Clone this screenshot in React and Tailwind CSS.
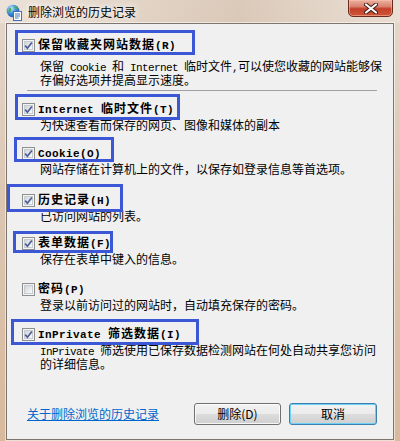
import React from 'react';

// one-byte runs (Latin, digits, brackets) take the narrow mono face, like SimSun's half-width glyphs
const Mix = ({ text, bold }) =>
    text.split(/([\x20-\x7e]+)/).map((part, i) =>
        /^[\x20-\x7e]+$/.test(part) ? (
            <span
                key={i}
                className={
                    bold
                        ? "whitespace-pre font-['Liberation_Mono',monospace] text-[11px] tracking-[0.4px]"
                        : "whitespace-pre font-['Liberation_Mono',monospace] text-[11px] tracking-[-0.6px]"
                }
            >
                {part}
            </span>
        ) : (
            part
        )
    );

const items = [
    {
        label: '保留收藏夹网站数据(R)',
        checked: true,
        mt: 'mt-0',
        dmt: 'mt-[7px]',
        lines: ['保留 Cookie 和 Internet 临时文件,可以使您收藏的网站能够保', '存偏好选项并提高显示速度。'],
        sep: true,
    },
    {
        label: 'Internet 临时文件(T)',
        checked: true,
        mt: 'mt-[11px]',
        dmt: 'mt-[2px]',
        lines: ['为快速查看而保存的网页、图像和媒体的副本'],
    },
    {
        label: 'Cookie(O)',
        checked: true,
        mt: 'mt-[14px]',
        dmt: 'mt-[2px]',
        lines: ['网站存储在计算机上的文件，以保存如登录信息等首选项。'],
    },
    {
        label: '历史记录(H)',
        checked: true,
        mt: 'mt-[17px]',
        dmt: 'mt-[2px]',
        lines: ['已访问网站的列表。'],
    },
    {
        label: '表单数据(F)',
        checked: true,
        mt: 'mt-[13px]',
        dmt: 'mt-[2px]',
        lines: ['保存在表单中键入的信息。'],
    },
    {
        label: '密码(P)',
        checked: false,
        mt: 'mt-[16px]',
        dmt: 'mt-[2px]',
        lines: ['登录以前访问过的网站时，自动填充保存的密码。'],
    },
    {
        label: 'InPrivate 筛选数据(I)',
        checked: true,
        mt: 'mt-[15px]',
        dmt: 'mt-[2px]',
        lines: ['InPrivate 筛选使用已保存数据检测网站在何处自动共享您访问', '的详细信息。'],
    },
];

// the blue frames drawn over the dialog
const marks = [
    'left-[15px] top-[30px] w-[180px] h-[25px]',
    'left-[15px] top-[94px] w-[165px] h-[26px]',
    'left-[14px] top-[137px] w-[100px] h-[25px]',
    'left-[7px] top-[184px] w-[116px] h-[28px]',
    'left-[13px] top-[231px] w-[100px] h-[22px]',
    'left-[11px] top-[319px] w-[188px] h-[26px]',
];

function CheckBox({ checked }) {
    return (
        <span className="relative block w-[13px] h-[13px] shrink-0 border border-[#8e8f8f] bg-[#f4f4f4]">
            <span className="absolute inset-[1px] border border-[#c6cbd2] bg-[linear-gradient(135deg,#d0d4d9,#fbfbfb)]" />
            {checked && (
                <svg className="absolute inset-0" width="11" height="11" viewBox="0 0 11 11">
                    <path d="M2.2 5.6 L4.4 8.2 L8.9 2.4" fill="none" stroke="#4a5d96" strokeWidth="1.7" />
                </svg>
            )}
        </span>
    );
}

function IeIcon() {
    return (
        <svg width="16" height="17" viewBox="0 0 16 17">
            <defs>
                <radialGradient id="globe" cx="0.35" cy="0.3" r="0.8">
                    <stop offset="0" stopColor="#bfe6ff" />
                    <stop offset="0.5" stopColor="#3d8fd8" />
                    <stop offset="1" stopColor="#1a4f9c" />
                </radialGradient>
            </defs>
            <circle cx="7" cy="7" r="6.3" fill="url(#globe)" />
            <path d="M3 4 C5 3 6 5 5 7 C4 9 3 8 2.5 7 Z M8 2.5 C10 2 12 4 11 5 C9.5 5.5 8.5 4 8 2.5 Z" fill="#4fb04a" />
            <rect x="7.5" y="7.5" width="8" height="9" fill="#ffffff" stroke="#3e6fb8" />
            <path d="M9 10 H14 M9 12 H14 M9 14 H12.5" stroke="#3e6fb8" strokeWidth="1" />
        </svg>
    );
}

export default function App() {
    return (
        <div className="relative w-[400px] h-[441px] overflow-hidden flex flex-col bg-[linear-gradient(180deg,#e5d8cc_0%,#dcc6b2_45%,#d8b99c_100%)] text-[12px] leading-[14px] text-black font-['Noto_Sans_CJK_SC',sans-serif]">
            {/* Title bar */}
            <div className="h-[23px] shrink-0 flex items-center bg-[linear-gradient(90deg,rgba(255,255,255,0.25),rgba(190,160,130,0.25)_60%,rgba(255,255,255,0.2))]">
                <div className="ml-[6px] mt-[1px]">
                    <IeIcon />
                </div>
                <span className="ml-[6px] text-[12px] [text-shadow:0_0_6px_#fff,0_0_10px_#fff]">
                    删除浏览的历史记录
                </span>
                <button className="ml-auto mr-[7px] self-start -mt-[1px] w-[45px] h-[18px] flex items-center justify-center rounded-b-[5px] border border-[#6a2a1e] bg-[linear-gradient(180deg,#eab0a0_0%,#da8470_40%,#c3402a_55%,#cf5536_100%)] shadow-[inset_0_0_0_1px_rgba(255,200,180,0.5)]">
                    <svg width="14" height="11" viewBox="0 0 14 11">
                        <path d="M2 1.5 L12 9.5 M12 1.5 L2 9.5" stroke="#3a1a14" strokeWidth="4" strokeLinecap="round" />
                        <path d="M2 1.5 L12 9.5 M12 1.5 L2 9.5" stroke="#ffffff" strokeWidth="2.2" strokeLinecap="round" />
                    </svg>
                </button>
            </div>

            {/* Client area */}
            <div className="h-[417px] mx-[6px] shrink-0 flex flex-col border border-[#7d756e] bg-[#f0f0f0] shadow-[0_0_0_1px_rgba(255,255,255,0.55)]">
                <div className="pl-[15px] pt-[14px]">
                    {items.map((item) => (
                        <div key={item.label} className={item.mt}>
                            <div className="h-[14px] flex items-center gap-[3px]">
                                <CheckBox checked={item.checked} />
                                <span className="font-bold tracking-[1px] whitespace-nowrap">
                                    <Mix text={item.label} bold />
                                </span>
                            </div>
                            <div className={`${item.dmt} pl-[18px]`}>
                                {item.lines.map((line) => (
                                    <div key={line} className="h-[14px] whitespace-nowrap">
                                        <Mix text={line} />
                                    </div>
                                ))}
                            </div>
                            {item.sep && <div className="mt-[3px] ml-[5px] w-[350px] h-px bg-[#a0a0a0]" />}
                        </div>
                    ))}
                </div>

                {/* Footer */}
                <div className="mt-auto pb-[14px] pl-[20px] pr-[16px] flex items-center">
                    <a href="#" className="text-[#0066cc] underline">
                        关于删除浏览的历史记录
                    </a>
                    <div className="ml-auto flex gap-[8px]">
                        <button className="w-[87px] h-[22px] rounded-[3px] border border-[#707070] bg-[linear-gradient(180deg,#f2f2f2_0%,#ebebeb_50%,#dddddd_50%,#cfcfcf_100%)] shadow-[inset_0_0_0_1px_rgba(255,255,255,0.8)] text-[12px]">
                            删除(D)
                        </button>
                        <button className="w-[88px] h-[22px] rounded-[3px] border border-[#3c7fb1] bg-[linear-gradient(180deg,#f2f2f2_0%,#ebebeb_50%,#dddddd_50%,#cfcfcf_100%)] shadow-[inset_0_0_0_1px_#6fd0f6] text-[12px]">
                            取消
                        </button>
                    </div>
                </div>
            </div>

            {marks.map((m) => (
                <div key={m} className={`absolute ${m} border-[3px] border-[#3b57d6]`} />
            ))}
        </div>
    );
}
